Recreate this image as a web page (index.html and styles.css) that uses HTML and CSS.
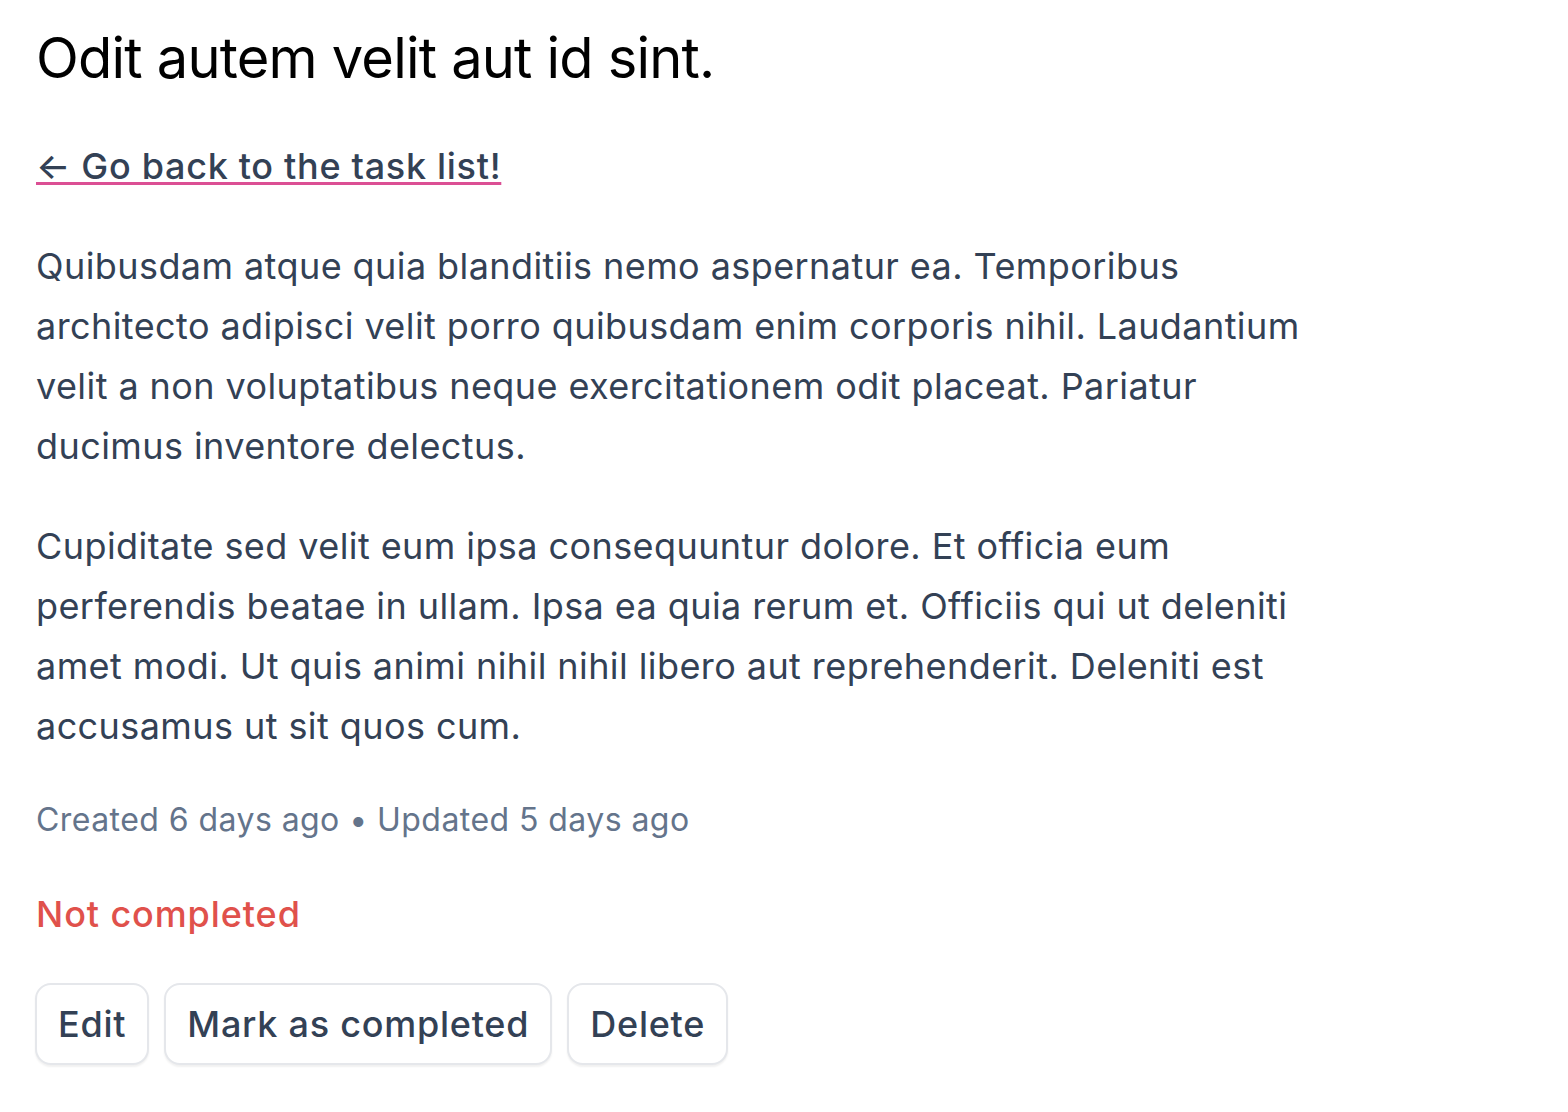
FILE: index.html
```html
<!DOCTYPE html>
<html lang="en">
<head>
<meta charset="utf-8">
<title>Task</title>
<link rel="stylesheet" href="styles.css">
</head>
<body>
<main class="task">
  <h1 class="task-title">Odit autem velit aut id sint.</h1>
  <a class="back-link" href="#">← Go back to the task list!</a>
  <div class="task-body">
    <p>Quibusdam atque quia blanditiis nemo aspernatur ea. Temporibus architecto adipisci velit porro quibusdam enim corporis nihil. Laudantium velit a non voluptatibus neque exercitationem odit placeat. Pariatur ducimus inventore delectus.</p>
    <p>Cupiditate sed velit eum ipsa consequuntur dolore. Et officia eum perferendis beatae in ullam. Ipsa ea quia rerum et. Officiis qui ut deleniti amet modi. Ut quis animi nihil nihil libero aut reprehenderit. Deleniti est accusamus ut sit quos cum.</p>
  </div>
  <p class="task-meta">Created 6 days ago • Updated 5 days ago</p>
  <p class="task-status">Not completed</p>
  <div class="task-actions">
    <button class="btn">Edit</button>
    <button class="btn">Mark as completed</button>
    <button class="btn">Delete</button>
  </div>
</main>
</body>
</html>
```
FILE: styles.css
```css
* { box-sizing: border-box; }
html, body { margin: 0; background: #fff; }
body {
  font-family: Inter, "Noto Sans", sans-serif;
  color: #334155;
}
.task {
  padding: 20px 36px;
  max-width: 1340px;
}
.task-title {
  margin: 0;
  font-size: 56px;
  line-height: 76px;
  font-weight: 400;
  color: #000;
  letter-spacing: -0.8px;
}
.back-link {
  display: inline-block;
  margin-top: 48px;
  font-size: 36px;
  line-height: 44px;
  font-weight: 500;
  letter-spacing: 0.7px;
  color: #334155;
  text-decoration: underline;
  text-decoration-color: #db4f94;
  text-decoration-thickness: 3px;
  text-underline-offset: 3px;
}
.task-body { margin-top: 48px; }
.task-body p {
  margin: 0 0 40px;
  font-size: 36px;
  line-height: 60px;
  letter-spacing: 0.42px;
}
.task-meta {
  margin: 44px 0 0;
  font-size: 32px;
  line-height: 40px;
  letter-spacing: 0.44px;
  color: #64748b;
}
.task-status {
  margin: 52px 0 0;
  font-size: 36px;
  line-height: 44px;
  font-weight: 500;
  letter-spacing: 0.9px;
  color: #e0514b;
}
.task-actions {
  display: flex;
  gap: 15px;
  margin-top: 47px;
  margin-left: -1px;
}
.btn {
  font-family: inherit;
  font-size: 36px;
  font-weight: 500;
  letter-spacing: 0.75px;
  color: #334155;
  background: #fff;
  border: 2px solid #e5e7eb;
  border-radius: 16px;
  height: 82px;
  padding: 0 21px;
  box-shadow: 0 2px 2px rgba(0,0,0,0.06);
}
```
